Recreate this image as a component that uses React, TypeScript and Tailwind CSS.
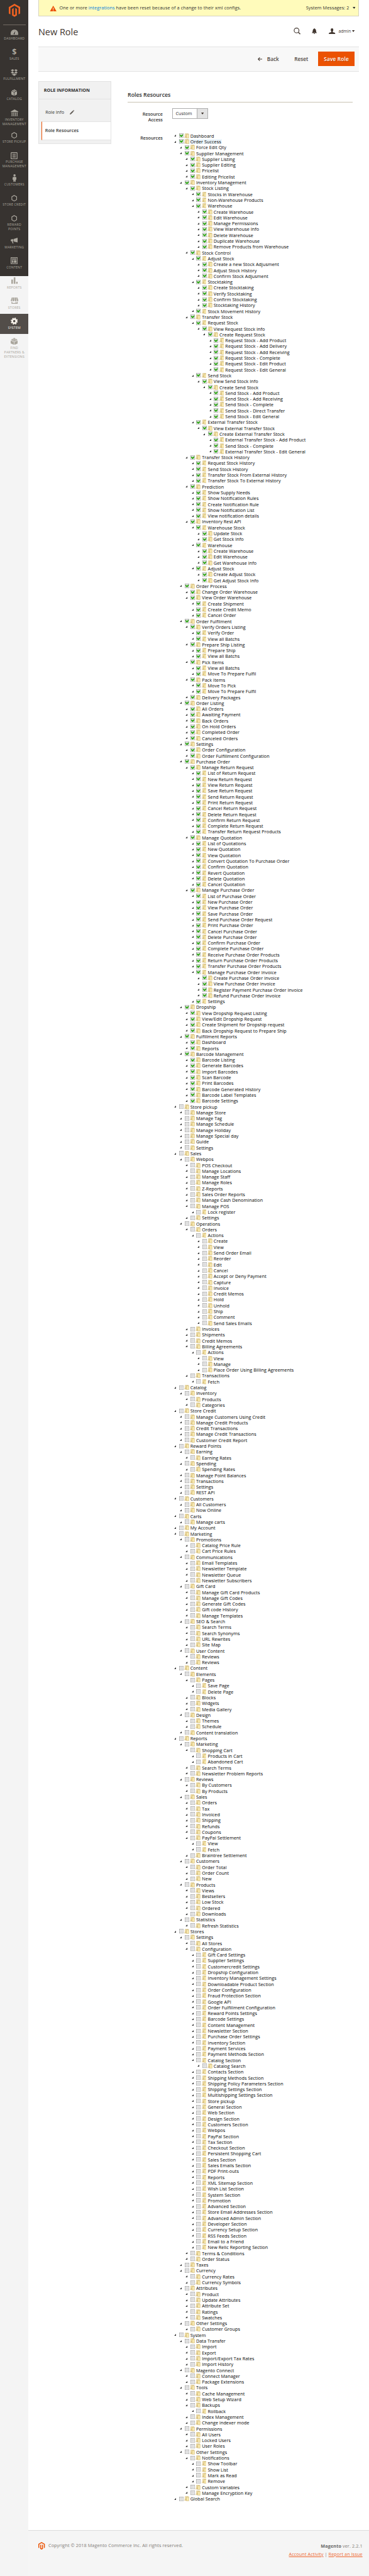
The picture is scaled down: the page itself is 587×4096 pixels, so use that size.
import React from "react";

const GRANTED = `0 Dashboard
0 Order Success
1 Force Edit Qty
1 Supplier Management
2 Supplier Listing
2 Supplier Editing
2 Pricelist
2 Editing Pricelist
1 Inventory Management
2 Stock Listing
3 Stocks in Warehouse
3 Non-Warehouse Products
3 Warehouse
4 Create Warehouse
4 Edit Warehouse
4 Manage Permissions
4 View Warehouse Info
4 Delete Warehouse
4 Duplicate Warehouse
4 Remove Products from Warehouse
2 Stock Control
3 Adjust Stock
4 Create a new Stock Adjusment
4 Adjust Stock History
4 Confirm Stock Adjusment
3 Stocktaking
4 Create Stocktaking
4 Verify Stocktaking
4 Confirm Stocktaking
4 Stocktaking History
3 Stock Movement History
2 Transfer Stock
3 Request Stock
4 View Request Stock Info
5 Create Request Stock
6 Request Stock - Add Product
6 Request Stock - Add Delivery
6 Request Stock - Add Receiving
6 Request Stock - Complete
6 Request Stock - Edit Product
6 Request Stock - Edit General
3 Send Stock
4 View Send Stock Info
5 Create Send Stock
6 Send Stock - Add Product
6 Send Stock - Add Receiving
6 Send Stock - Complete
6 Send Stock - Direct Transfer
6 Send Stock - Edit General
3 External Transfer Stock
4 View External Transfer Stock
5 Create External Transfer Stock
6 External Transfer Stock - Add Product
6 Send Stock - Complete
6 External Transfer Stock - Edit General
2 Transfer Stock History
3 Request Stock History
3 Send Stock History
3 Transfer Stock From External History
3 Transfer Stock To External History
2 Prediction
3 Show Supply Needs
3 Show Notification Rules
3 Create Notification Rule
3 Show Notification List
3 View notification details
2 Inventory Rest API
3 Warehouse Stock
4 Update Stock
4 Get Stock Info
3 Warehouse
4 Create Warehouse
4 Edit Warehouse
4 Get Warehouse Info
3 Adjust Stock
4 Create Adjust Stock
4 Get Adjust Stock Info
1 Order Process
2 Change Order Warehouse
2 View Order Warehouse
3 Create Shipment
3 Create Credit Memo
3 Cancel Order
1 Order Fulfilment
2 Verify Orders Listing
3 Verify Order
3 View all Batchs
2 Prepare Ship Listing
3 Prepare Ship
3 View all Batchs
2 Pick Items
3 View all Batchs
3 Move To Prepare Fulfil
2 Pack Items
3 Move To Pick
3 Move To Prepare Fulfil
2 Delivery Packages
1 Order Listing
2 All Orders
2 Awaiting Payment
2 Back Orders
2 On Hold Orders
2 Completed Order
2 Canceled Orders
1 Settings
2 Order Configuration
2 Order Fulfillment Configuration
1 Purchase Order
2 Manage Return Request
3 List of Return Request
3 New Return Request
3 View Return Request
3 Save Return Request
3 Send Return Request
3 Print Return Request
3 Cancel Return Request
3 Delete Return Request
3 Confirm Return Request
3 Complete Return Request
3 Transfer Return Request Products
2 Manage Quotation
3 List of Quotations
3 New Quotation
3 View Quotation
3 Convert Quotation To Purchase Order
3 Confirm Quotation
3 Revert Quotation
3 Delete Quotation
3 Cancel Quotation
2 Manage Purchase Order
3 List of Purchase Order
3 New Purchase Order
3 View Purchase Order
3 Save Purchase Order
3 Send Purchase Order Request
3 Print Purchase Order
3 Cancel Purchase Order
3 Delete Purchase Order
3 Confirm Purchase Order
3 Complete Purchase Order
3 Receive Purchase Order Products
3 Return Purchase Order Products
3 Transfer Purchase Order Products
3 Manage Purchase Order Invoice
4 Create Purchase Order Invoice
4 View Purchase Order Invoice
4 Register Payment Purchase Order Invoice
4 Refund Purchase Order Invoice
3 Settings
1 Dropship
2 View Dropship Request Listing
2 View/Edit Dropship Request
2 Create Shipment for Dropship request
2 Back Dropship Request to Prepare Ship
1 Fulfillment Reports
2 Dashboard
2 Reports
1 Barcode Management
2 Barcode Listing
2 Generate Barcodes
2 Import Barcodes
2 Scan Barcode
2 Print Barcodes
2 Barcode Generated History
2 Barcode Label Templates
2 Barcode Settings`;

const DENIED = `0 Store pickup
1 Manage Store
1 Manage Tag
1 Manage Schedule
1 Manage Holiday
1 Manage Special day
1 Guide
1 Settings
0 Sales
1 Webpos
2 POS Checkout
2 Manage Locations
2 Manage Staff
2 Manage Roles
2 Z-Reports
2 Sales Order Reports
2 Manage Cash Denomination
2 Manage POS
3 Lock register
2 Settings
1 Operations
2 Orders
3 Actions
4 Create
4 View
4 Send Order Email
4 Reorder
4 Edit
4 Cancel
4 Accept or Deny Payment
4 Capture
4 Invoice
4 Credit Memos
4 Hold
4 Unhold
4 Ship
4 Comment
4 Send Sales Emails
2 Invoices
2 Shipments
2 Credit Memos
2 Billing Agreements
3 Actions
4 View
4 Manage
4 Place Order Using Billing Agreements
2 Transactions
3 Fetch
0 Catalog
1 Inventory
2 Products
2 Categories
0 Store Credit
1 Manage Customers Using Credit
1 Manage Credit Products
1 Credit Transactions
1 Manage Credit Transactions
1 Customer Credit Report
0 Reward Points
1 Earning
2 Earning Rates
1 Spending
2 Spending Rates
1 Manage Point Balances
1 Transactions
1 Settings
1 REST API
0 Customers
1 All Customers
1 Now Online
0 Carts
1 Manage carts
0 My Account
0 Marketing
1 Promotions
2 Catalog Price Rule
2 Cart Price Rules
1 Communications
2 Email Templates
2 Newsletter Template
2 Newsletter Queue
2 Newsletter Subscribers
1 Gift Card
2 Manage Gift Card Products
2 Manage Gift Codes
2 Generate Gift Codes
2 Gift code History
2 Manage Templates
1 SEO & Search
2 Search Terms
2 Search Synonyms
2 URL Rewrites
2 Site Map
1 User Content
2 Reviews
2 Reviews
0 Content
1 Elements
2 Pages
3 Save Page
3 Delete Page
2 Blocks
2 Widgets
2 Media Gallery
1 Design
2 Themes
2 Schedule
1 Content translation
0 Reports
1 Marketing
2 Shopping Cart
3 Products in Cart
3 Abandoned Cart
2 Search Terms
2 Newsletter Problem Reports
1 Reviews
2 By Customers
2 By Products
1 Sales
2 Orders
2 Tax
2 Invoiced
2 Shipping
2 Refunds
2 Coupons
2 PayPal Settlement
3 View
3 Fetch
2 Braintree Settlement
1 Customers
2 Order Total
2 Order Count
2 New
1 Products
2 Views
2 Bestsellers
2 Low Stock
2 Ordered
2 Downloads
1 Statistics
2 Refresh Statistics
0 Stores
1 Settings
2 All Stores
2 Configuration
3 Gift Card Settings
3 Supplier Settings
3 Customercredit Settings
3 Dropship Configuration
3 Inventory Management Settings
3 Downloadable Product Section
3 Order Configuration
3 Fraud Protection Section
3 Google API
3 Order Fulfillment Configuration
3 Reward Points Settings
3 Barcode Settings
3 Content Management
3 Newsletter Section
3 Purchase Order Settings
3 Inventory Section
3 Payment Services
3 Payment Methods Section
3 Catalog Section
4 Catalog Search
3 Contacts Section
3 Shipping Methods Section
3 Shipping Policy Parameters Section
3 Shipping Settings Section
3 Multishipping Settings Section
3 Store pickup
3 General Section
3 Web Section
3 Design Section
3 Customers Section
3 Webpos
3 PayPal Section
3 Tax Section
3 Checkout Section
3 Persistent Shopping Cart
3 Sales Section
3 Sales Emails Section
3 PDF Print-outs
3 Reports
3 XML Sitemap Section
3 Wish List Section
3 System Section
3 Promotion
3 Advanced Section
3 Store Email Addresses Section
3 Advanced Admin Section
3 Developer Section
3 Currency Setup Section
3 RSS Feeds Section
3 Email to a Friend
3 New Relic Reporting Section
2 Terms & Conditions
2 Order Status
1 Taxes
1 Currency
2 Currency Rates
2 Currency Symbols
1 Attributes
2 Product
2 Update Attributes
2 Attribute Set
2 Ratings
2 Swatches
1 Other Settings
2 Customer Groups
0 System
1 Data Transfer
2 Import
2 Export
2 Import/Export Tax Rates
2 Import History
1 Magento Connect
2 Connect Manager
2 Package Extensions
1 Tools
2 Cache Management
2 Web Setup Wizard
2 Backups
3 Rollback
2 Index Management
2 Change indexer mode
1 Permissions
2 All Users
2 Locked Users
2 User Roles
1 Other Settings
2 Notifications
3 Show Toolbar
3 Show List
3 Mark as Read
3 Remove
2 Custom Variables
2 Manage Encryption Key
0 Global Search`;

type Node = { depth: number; label: string; checked: boolean };

const parse = (text: string, checked: boolean): Node[] =>
  text.split("\n").map((line) => ({ depth: Number(line[0]), label: line.slice(2), checked }));

const nodes: Node[] = [...parse(GRANTED, true), ...parse(DENIED, false)];

const INDENT = 17.95;

function TreeRow({ node, selected }: { node: Node; selected: boolean }) {
  return (
    <li className="flex h-[18px] items-center nth-[4n]:h-[18.03px]" style={{ paddingLeft: 5 + node.depth * INDENT }}>
      <svg className="mr-[8px] h-[6px] w-[6px] shrink-0" viewBox="0 0 6 6">
        <path d="M6 0V6H0Z" fill="#2f2f2f" />
      </svg>
      <span className={selected ? "flex h-[16px] items-center bg-[#eef7fd] pr-[3px] pl-[1px]" : "flex h-[16px] items-center pl-[1px]"}>
        <svg className="h-[14px] w-[14px] shrink-0" viewBox="0 0 14 14">
          <rect x="0.8" y="0.8" width="12.4" height="12.4" fill="#f7f7f7" stroke="#9a9a9a" strokeWidth="1.3" />
          <path d="M2.5 2.5H11V11H2.5Z" fill="#dedede" />
          {node.checked && <path d="M1.2 3.6C3 3.8 4.8 5 6.2 7C8 4.6 10.2 3.2 12.6 2.8C12 7 9.6 10.2 6.6 11.6C3.8 10.2 1.6 7.4 1.2 3.6Z" fill="#2ba812" />}
        </svg>
        <svg className="ml-[2px] h-[16px] w-[15px] shrink-0" viewBox="0 0 15 16">
          <path d="M2.6 1.5L4 0.6H12.4L13.4 3H7.5V13.5H0.6L2.2 9Z" fill="#f0dfa6" stroke="#cdb67c" strokeWidth="0.8" />
          <path d="M5.2 12.6V8.2H4.2V14Z" fill="#c7a75f" />
          <path d="M6.8 3H14.3V14.4L11.8 15.4L10.8 14.4H6.8Z" fill="#f7e8ae" stroke="#c0a560" strokeWidth="0.9" />
        </svg>
        <span className="ml-[4px] text-[14px] leading-[16px] tracking-[0.13px] whitespace-nowrap text-black">{node.label}</span>
      </span>
    </li>
  );
}

const Hexagon = () => (
  <svg width="18" height="20" viewBox="0 0 18 20" fill="none" stroke="currentColor" strokeWidth="2.2">
    <path d="M9 1.3L16.4 5.6V14.4L9 18.7L1.6 14.4V5.6Z" />
  </svg>
);

const icons: Record<string, React.ReactNode> = {
  dashboard: (
    <svg width="23" height="17" viewBox="0 0 23 17">
      <path d="M0 16.5V11.5A11.5 11.5 0 0 1 23 11.5V16.5Z" fill="currentColor" />
      <path d="M14.5 4.5L12.8 12.2A2 2 0 1 1 10 11Z" fill="#373330" />
      <path d="M3 11.5H5M18 11.5H20M5.2 5.8L6.6 7.2M11.5 2.6V4.4M17.8 5.8L16.8 7" stroke="#373330" strokeWidth="1" />
    </svg>
  ),
  sales: <span className="text-[24px] leading-[20px] font-bold">$</span>,
  fulfillment: (
    <svg width="22" height="21" viewBox="0 0 22 21" fill="currentColor">
      <path d="M6 0L11 3.4L5.5 7L0 3.6ZM16 0L22 3.6L16.5 7L11 3.4ZM5.5 7L11 10.6L6 14L0 10.4ZM16.5 7L22 10.4L16 14L11 10.6ZM3.5 14.2L6.2 16L11 12.6L15.8 16L18.5 14.2V16L11 21L3.5 16Z" />
    </svg>
  ),
  catalog: (
    <svg width="18" height="20" viewBox="0 0 18 20" fill="currentColor">
      <path d="M0 6L8.3 9.4V20L0 15.8ZM18 6L9.7 9.4V20L18 15.8ZM0.8 4.6L5 2.4L13 6.2L9 8ZM6.4 1.8L9 0.2L17.2 4.6L14.4 5.6Z" />
    </svg>
  ),
  inventory: (
    <svg width="24" height="23" viewBox="0 0 24 23" fill="currentColor">
      <path d="M12 0L23.5 6.2V8H0.5V6.2ZM2.5 9.5H6V10.5H5.5V19H6V20H2.5V19H3V10.5H2.5ZM7.7 9.5H11.2V10.5H10.7V19H11.2V20H7.7V19H8.2V10.5H7.7ZM12.8 9.5H16.3V10.5H15.8V19H16.3V20H12.8V19H13.3V10.5H12.8ZM18 9.5H21.5V10.5H21V19H21.5V20H18V19H18.5V10.5H18ZM0.5 21H23.5V23H0.5Z" />
    </svg>
  ),
  hexagon: <Hexagon />,
  purchase: (
    <svg width="21" height="22" viewBox="0 0 21 22" fill="none" stroke="currentColor">
      <rect x="1.3" y="1.3" width="18.4" height="19.4" rx="1.2" strokeWidth="2.4" />
      <path d="M5.5 6H15.5M5.5 9.3H15.5M5.5 12.6H15.5M5.5 16H15.5" strokeWidth="1.7" />
    </svg>
  ),
  customers: (
    <svg width="12" height="24" viewBox="0 0 12 24" fill="currentColor">
      <circle cx="6" cy="3.6" r="3.5" />
      <path d="M3 8H9Q11.6 8 11.8 11L12 17H9.8V14L9.4 24H6.8L6 18L5.2 24H2.6L2.2 14V17H0L0.2 11Q0.4 8 3 8Z" />
    </svg>
  ),
  marketing: (
    <svg width="22" height="18" viewBox="0 0 22 18" fill="currentColor">
      <path d="M21.5 0V14.5L9 11.5V4ZM7.8 4.3V11.3H6L9 17.5H5.6L3.6 11.2H2L0.2 9.8V6.2L2 4.6Z" />
    </svg>
  ),
  content: (
    <svg width="22" height="21" viewBox="0 0 22 21">
      <rect x="1.2" y="1.2" width="19.6" height="18.6" fill="none" stroke="currentColor" strokeWidth="2.2" />
      <path d="M4 4.2H18V7.2H4ZM4 9H8.4V17H4ZM10 9H18V17H10Z" fill="currentColor" />
    </svg>
  ),
  reports: (
    <svg width="20" height="20" viewBox="0 0 20 20" fill="currentColor">
      <path d="M0 7H5V20H0ZM7.5 0H12.5V20H7.5ZM15 13.5H20V20H15Z" />
    </svg>
  ),
  stores: (
    <svg width="24" height="20" viewBox="0 0 24 20" fill="currentColor">
      <path d="M3.5 0H6.2L4.6 9Q4 11.5 2 11.5Q0 11.5 0.2 9ZM7.2 0H11.3V9Q11 11.5 8.4 11.5Q6 11.5 5.8 9ZM12.7 0H16.8L18.2 9Q18 11.5 15.6 11.5Q13 11.5 12.7 9ZM17.8 0H20.5L23.8 9Q24 11.5 22 11.5Q20 11.5 19.4 9ZM2.5 13H5V17H15V13H17V17H19V13H21.5V19.5H2.5Z" />
    </svg>
  ),
  system: (
    <svg width="22" height="22" viewBox="0 0 22 22" fill="none" stroke="currentColor">
      <circle cx="11" cy="11" r="6" strokeWidth="5" />
      <circle cx="11" cy="11" r="9.4" strokeWidth="3" strokeDasharray="4 3.38" />
    </svg>
  ),
  partners: (
    <svg width="22" height="22" viewBox="0 0 22 22" fill="currentColor">
      <path d="M0 8.6L10.4 13.2V22L0 17.4ZM22 8.6L11.6 13.2V22L22 17.4ZM0.6 7.2L11 2.4L21.4 7.2L11 12Z" />
      <path d="M7.5 2.5Q11 -1.5 14.5 2.5V4H7.5ZM2.4 5Q5.4 2 8.4 5V7H2.4ZM13.6 5Q16.6 2 19.6 5V7H13.6ZM7.8 8Q11 5 14.2 8V10H7.8Z" stroke="#f4f4f4" strokeWidth="0.5" />
    </svg>
  ),
};

const menu: { icon: string; lines: string[]; active?: boolean }[] = [
  { icon: "dashboard", lines: ["DASHBOARD"] },
  { icon: "sales", lines: ["SALES"] },
  { icon: "fulfillment", lines: ["FULFILLMENT"] },
  { icon: "catalog", lines: ["CATALOG"] },
  { icon: "inventory", lines: ["INVENTORY", "MANAGEMENT"] },
  { icon: "hexagon", lines: ["STORE PICKUP"] },
  { icon: "purchase", lines: ["PURCHASE", "MANAGEMENT"] },
  { icon: "customers", lines: ["CUSTOMERS"] },
  { icon: "hexagon", lines: ["STORE CREDIT"] },
  { icon: "hexagon", lines: ["REWARD", "POINTS"] },
  { icon: "marketing", lines: ["MARKETING"] },
  { icon: "content", lines: ["CONTENT"] },
  { icon: "reports", lines: ["REPORTS"] },
  { icon: "stores", lines: ["STORES"] },
  { icon: "system", lines: ["SYSTEM"], active: true },
  { icon: "partners", lines: ["FIND", "PARTNERS &", "EXTENSIONS"] },
];

function MagentoLogo({ className }: { className: string }) {
  return (
    <svg className={className} viewBox="0 0 35 40" preserveAspectRatio="none">
      <path d="M17.5 0L35 10V30L30 33V13L17.5 5.8L5 13V33L0 30V10Z" />
      <path d="M10 16L15 13.2V33.2L17.5 34.6L20 33.2V13.2L25 16V35.8L17.5 40L10 35.8Z" />
    </svg>
  );
}

function Caret({ className }: { className: string }) {
  return (
    <svg className={className} viewBox="0 0 8 6" preserveAspectRatio="none">
      <path d="M0 0H8L4 6Z" fill="currentColor" />
    </svg>
  );
}

function Sidebar() {
  return (
    <nav className="flex w-[88px] shrink-0 flex-col bg-[linear-gradient(#373330_850px,#f4f4f4_850px)] text-[#aaa69d]">
      <div className="flex h-[77px] flex-col items-center pt-[12px]">
        <MagentoLogo className="h-[40px] w-[35px] fill-[#f26322]" />
        <div className="mt-[23px] h-[1px] w-[70px] border-t border-[#736963]" />
      </div>
      {menu.map((item, i) => (
        <div
          key={i}
          className={
            item.active
              ? "h-[62px] bg-[#524d49] text-[#f7f3eb]"
              : item.lines.length === 2
                ? "h-[69px]"
                : "h-[62px]"
          }
        >
          <div className="flex h-[36px] items-center justify-center pt-[9px]">{icons[item.icon]}</div>
          <div className="text-center text-[10px] leading-[13.7px] tracking-[0.4px]">
            {item.lines.map((line) => (
              <div key={line} className="whitespace-nowrap">{line}</div>
            ))}
          </div>
        </div>
      ))}
    </nav>
  );
}

export default function App() {
  return (
    <div className="h-[7926px] w-[1136px] overflow-hidden bg-[#f5f5f5] font-['Open_Sans',sans-serif] text-[14px] leading-[18px] text-[#303030] [zoom:0.51672]">
      <div className="flex h-full">
        <Sidebar />
        <div className="flex w-[1048px] flex-col">
          <main className="flex h-[7787px] flex-col border-b border-[#dcdcdc] bg-white pr-[30px] pl-[30px]">
            <div className="flex h-[51px] shrink-0 items-center border-r border-b border-l border-[#d6d3c0] bg-[#fffbbb] pr-[10px] pl-[33px] tracking-[0.21px]">
              <svg className="mt-[3px] h-[19px] w-[22px]" viewBox="0 0 22 19">
                <path d="M11 0L22 19H0Z" fill="#eb5202" />
                <path d="M10 6.5H12L11.7 13H10.3ZM10 14.3H12V16.3H10Z" fill="#fff" />
              </svg>
              <span className="ml-[8px] whitespace-nowrap">
                One or more <span className="text-[#007bdb]">integrations</span> have been reset because of a change to their xml configs.
              </span>
              <span className="ml-auto whitespace-nowrap">System Messages: 2</span>
              <Caret className="ml-[10px] h-[6px] w-[9px]" />
            </div>

            <header className="flex h-[92px] shrink-0 items-center pt-[4px] text-[#41362f]">
              <h1 className="text-[28px] leading-[34px]">New Role</h1>
              <div className="ml-auto flex items-center pr-[14px] pb-[6px]">
                <svg className="h-[21px] w-[22px]" viewBox="0 0 22 21" fill="none" stroke="currentColor">
                  <circle cx="9.2" cy="8.6" r="7.4" strokeWidth="2.2" />
                  <path d="M14.4 14L20.5 20" strokeWidth="2.8" />
                </svg>
                <svg className="ml-[34px] h-[18px] w-[16px]" viewBox="0 0 16 18" fill="currentColor">
                  <path d="M8 0Q9.4 0 9.4 1.4Q13 2.4 13 7Q13 12 16 14.6H0Q3 12 3 7Q3 2.4 6.6 1.4Q6.6 0 8 0ZM6 15.6H10Q9.6 18 8 18Q6.4 18 6 15.6Z" />
                </svg>
                <svg className="ml-[37px] h-[18px] w-[20px]" viewBox="0 0 20 18" fill="currentColor">
                  <path d="M10 0Q14 0 14 4.6Q14 8 12.2 9.6V11.4L18.4 13.6Q20 14.4 20 18H0Q0 14.4 1.6 13.6L7.8 11.4V9.6Q6 8 6 4.6Q6 0 10 0Z" />
                </svg>
                <span className="ml-[9px] w-[36px] text-[13px]">admin</span>
                <Caret className="ml-[6px] h-[6px] w-[8px]" />
              </div>
            </header>

            <div className="flex h-[77px] shrink-0 items-center justify-end border-y border-[#e3e3e3] bg-[#f8f8f8] pr-[15px] text-[16px] font-semibold text-[#514943]">
              <svg className="mr-[15px] h-[12px] w-[14px]" viewBox="0 0 14 12" fill="none" stroke="#41362f" strokeWidth="2">
                <path d="M6.5 0.8L1.4 6L6.5 11.2M1.4 6H14" />
              </svg>
              <span className="w-[37px] whitespace-nowrap">Back</span>
              <span className="ml-[47px] w-[44px] whitespace-nowrap">Reset</span>
              <button className="ml-[30px] h-[45px] w-[111px] bg-[#eb5202] text-[16px] font-semibold tracking-[0.35px] whitespace-nowrap text-white [text-shadow:1px_1px_0_rgba(0,0,0,0.25)]">
                Save Role
              </button>
            </div>

            <div className="flex">
              <aside className="mt-[30px] h-[194px] w-[225px] shrink-0 border border-[#e3e3e3] bg-[#f1f1f1]">
                <div className="flex h-[54px] items-center border-b border-[#e3e3e3] pl-[15px] font-bold">
                  <span className="pt-[2px] whitespace-nowrap">ROLE INFORMATION</span>
                </div>
                <div className="flex h-[67px] items-center pt-[11px] pl-[20px]">
                  <span className="w-[60px] whitespace-nowrap">Role Info</span>
                  <svg className="ml-[15px] h-[14px] w-[14px]" viewBox="0 0 14 14" fill="#5c5651">
                    <path d="M0 14L1 10L9.4 1.8L12 4.4L3.8 12.8ZM10.2 1L11.2 0.2Q12 -0.2 12.8 0.6L13.6 1.4Q14 2.2 13.4 2.8L12.8 3.6Z" />
                  </svg>
                </div>
                <div className="ml-[8px] flex h-[59px] items-center border-y border-l-[3px] border-y-[#e3e3e3] border-l-[#eb5202] bg-white pl-[9px] font-semibold">
                  <span className="tracking-[0.1px] whitespace-nowrap">Role Resources</span>
                </div>
              </aside>

              <section className="ml-[50px] w-[693px]">
                <h2 className="mt-[60px] flex h-[35px] items-start border-b border-[#cac3b4] pt-[3px] text-[17px] leading-[22px] font-semibold">
                  Roles Resources
                </h2>
                <div className="flex pt-[18px]">
                  <div className="w-[108px] pt-[9px] text-right leading-[19px] font-semibold">
                    Resource
                    <br />
                    Access
                  </div>
                  <div className="ml-[30px] flex h-[33px] w-[109px] items-center border border-[#adadad]">
                    <span className="w-[73px] pl-[8px]">Custom</span>
                    <span className="flex h-full flex-1 items-center justify-center border-l border-[#adadad] bg-[#e3e3e3] text-[#41362f]">
                      <Caret className="h-[6px] w-[8px]" />
                    </span>
                  </div>
                </div>
                <div className="flex pt-[28.7px]">
                  <div className="w-[108px] pt-[8px] text-right font-semibold">Resources</div>
                  <ul className="ml-[30px]">
                    {nodes.map((node, i) => (
                      <TreeRow key={i} node={node} selected={i === 1} />
                    ))}
                  </ul>
                </div>
              </section>
            </div>
          </main>

          <footer className="flex justify-between pt-[35px] pr-[20px] pl-[31px] tracking-[0.22px] text-[#827c78]">
            <div className="flex h-[24px] items-center">
              <MagentoLogo className="h-[23px] w-[20px] fill-[#eb5202]" />
              <span className="ml-[10px] whitespace-nowrap">Copyright © 2018 Magento Commerce Inc. All rights reserved.</span>
            </div>
            <div className="text-right leading-[25px] whitespace-nowrap">
              <div>
                <span className="font-bold text-[#666]">Magento</span> ver. 2.2.1
              </div>
              <div>
                <span className="text-[#ef672f] underline">Account Activity</span> | <span className="text-[#ef672f] underline">Report an Issue</span>
              </div>
            </div>
          </footer>
        </div>
      </div>
    </div>
  );
}
